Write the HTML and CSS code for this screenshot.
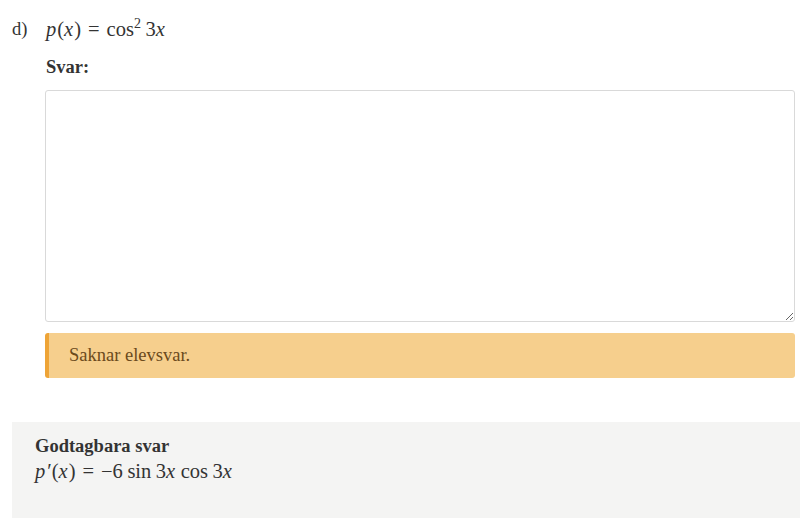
FILE: index.html
```html
<!DOCTYPE html>
<html lang="sv">
<head>
<meta charset="utf-8">
<link rel="stylesheet" href="styles.css">
</head>
<body>
<div class="page">
  <div class="question">
    <div class="label">d)</div>
    <div class="content">
      <div class="math prompt"><i>p</i>(<i>x</i>)<span class="rel">=</span>cos<sup>2</sup><span class="sp"></span>3<i>x</i></div>
      <div class="svar">Svar:</div>
      <textarea class="answer"></textarea>
      <div class="alert">Saknar elevsvar.</div>
    </div>
  </div>
  <div class="accepted">
    <div class="acc-title">Godtagbara svar</div>
    <div class="math"><i>p</i><span class="prime">′</span>(<i>x</i>)<span class="rel">=</span>−6<span class="sp"></span>sin<span class="sp"></span>3<i>x</i><span class="sp"></span>cos<span class="sp"></span>3<i>x</i></div>
  </div>
</div>
</body>
</html>
```
FILE: styles.css
```css
html, body {
  margin: 0;
  padding: 0;
  background: #fff;
}
body {
  font-family: "Liberation Serif", "Times New Roman", serif;
  color: #333;
  font-size: 18.5px;
}
.page {
  padding: 17px 0 0 12px;
}
.question {
  display: flex;
}
.label {
  width: 33px;
  flex: none;
  line-height: 24px;
}
.content {
  width: 750px;
  display: flex;
  flex-direction: column;
}
.math {
  font-family: "Liberation Serif", "Times New Roman", serif;
  font-size: 20.5px;
  line-height: 24px;
  color: #333;
}
.math i {
  font-style: italic;
  padding-right: 1px;
}
.math sup {
  font-size: 14px;
  line-height: 0;
  vertical-align: 8px;
}
.rel {
  margin: 0 7px;
}
.sp {
  display: inline-block;
  width: 4.5px;
}
.prime {
  margin-left: 1px;
}
.prompt {
  margin-left: 1px;
}
.svar {
  font-weight: bold;
  margin-top: 15px;
  margin-left: 1px;
  line-height: 22px;
}
.answer {
  display: block;
  margin-top: 12px;
  width: 750px;
  height: 232px;
  box-sizing: border-box;
  border: 1px solid #d9d9d9;
  border-radius: 3px;
  resize: vertical;
  padding: 6px 10px;
  font: inherit;
  background: #fff;
}
.alert {
  margin-top: 11px;
  height: 45px;
  box-sizing: border-box;
  background: #f6cf8d;
  border-left: 4px solid #eea437;
  border-radius: 3px;
  padding: 0 0 0 20px;
  line-height: 44px;
  color: #6b4a1c;
}
.accepted {
  margin-top: 44px;
  background: #f4f4f3;
  height: 96px;
  padding: 13px 23px 0;
  box-sizing: border-box;
}
.acc-title {
  font-weight: bold;
  line-height: 23px;
}
.accepted .math {
  margin-top: 1px;
}
```
